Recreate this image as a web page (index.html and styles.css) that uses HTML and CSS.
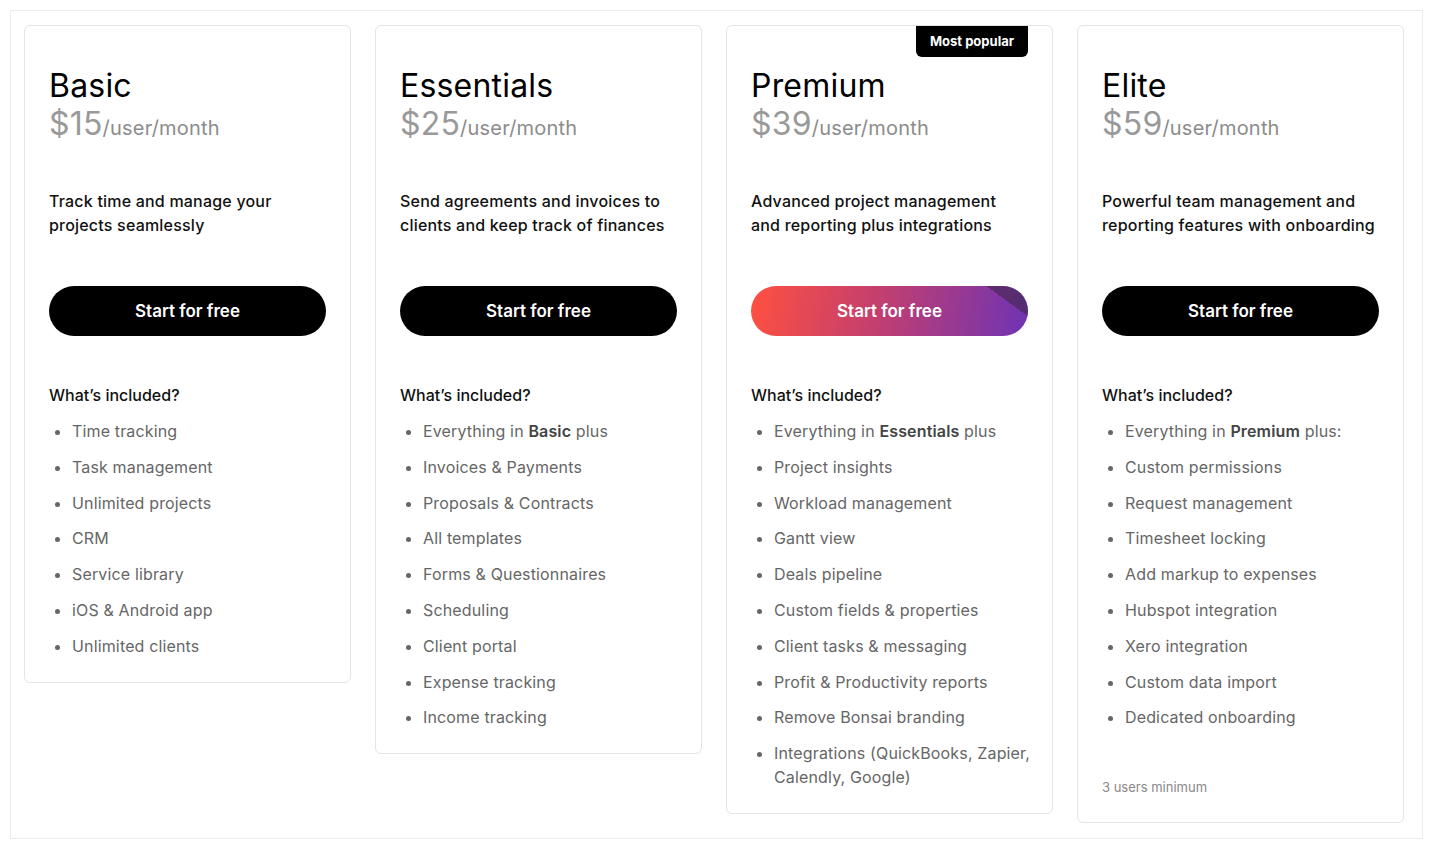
FILE: index.html
```html
<!DOCTYPE html>
<html>
    <head>
        <meta charset="utf-8" />
        <title>Pricing</title>
        <link rel="stylesheet" href="styles.css">
    </head>
    <body>
        <div class="panel">
            <div class="plan">
                <h2 class="plan_name">Basic</h2>
                <div class="plan_price"><span class="amount">$15</span>/user/month</div>
                <p class="plan_desc">Track time and manage your projects seamlessly</p>
                <a class="btn" href="#">Start for free</a>
                <h3 class="inc_title">What’s included?</h3>
                <ul class="features">
                    <li>Time tracking</li>
                    <li>Task management</li>
                    <li>Unlimited projects</li>
                    <li>CRM</li>
                    <li>Service library</li>
                    <li>iOS &amp; Android app</li>
                    <li>Unlimited clients</li>
                </ul>
            </div>
            <div class="plan">
                <h2 class="plan_name">Essentials</h2>
                <div class="plan_price"><span class="amount">$25</span>/user/month</div>
                <p class="plan_desc">Send agreements and invoices to clients and keep track of finances</p>
                <a class="btn" href="#">Start for free</a>
                <h3 class="inc_title">What’s included?</h3>
                <ul class="features">
                    <li>Everything in <b>Basic</b> plus</li>
                    <li>Invoices &amp; Payments</li>
                    <li>Proposals &amp; Contracts</li>
                    <li>All templates</li>
                    <li>Forms &amp; Questionnaires</li>
                    <li>Scheduling</li>
                    <li>Client portal</li>
                    <li>Expense tracking</li>
                    <li>Income tracking</li>
                </ul>
            </div>
            <div class="plan plan_popular">
                <div class="badge">Most popular</div>
                <h2 class="plan_name">Premium</h2>
                <div class="plan_price"><span class="amount">$39</span>/user/month</div>
                <p class="plan_desc">Advanced project management and reporting plus integrations</p>
                <a class="btn btn_grad" href="#">Start for free</a>
                <h3 class="inc_title">What’s included?</h3>
                <ul class="features">
                    <li>Everything in <b>Essentials</b> plus</li>
                    <li>Project insights</li>
                    <li>Workload management</li>
                    <li>Gantt view</li>
                    <li>Deals pipeline</li>
                    <li>Custom fields &amp; properties</li>
                    <li>Client tasks &amp; messaging</li>
                    <li>Profit &amp; Productivity reports</li>
                    <li>Remove Bonsai branding</li>
                    <li>Integrations (QuickBooks, Zapier, Calendly, Google)</li>
                </ul>
            </div>
            <div class="plan">
                <h2 class="plan_name">Elite</h2>
                <div class="plan_price"><span class="amount">$59</span>/user/month</div>
                <p class="plan_desc">Powerful team management and reporting features with onboarding</p>
                <a class="btn" href="#">Start for free</a>
                <h3 class="inc_title">What’s included?</h3>
                <ul class="features">
                    <li>Everything in <b>Premium</b> plus:</li>
                    <li>Custom permissions</li>
                    <li>Request management</li>
                    <li>Timesheet locking</li>
                    <li>Add markup to expenses</li>
                    <li>Hubspot integration</li>
                    <li>Xero integration</li>
                    <li>Custom data import</li>
                    <li>Dedicated onboarding</li>
                </ul>
                <p class="plan_note">3 users minimum</p>
            </div>
        </div>
    </body>
</html>
```

FILE: styles.css
```css
html{
    background:#fff;
}
body{
    margin:10px;
    font-family:Inter,"Noto Sans",sans-serif;
    color:#111;
}
.panel{
    height:829px;
    box-sizing:border-box;
    padding:14px 0 0 13px;
    display:flex;
    align-items:flex-start;
    gap:24px;
    background:#fff;
    border:1px solid #ececec;
    box-shadow:0 0 10px 1px rgba(0,0,0,0.2);
}
.plan{
    position:relative;
    flex:0 0 327px;
    box-sizing:border-box;
    padding:41px 24px 24px 24px;
    border:1px solid #e4e4e4;
    border-radius:6px;
}
.plan_name{
    margin:0;
    font-size:32px;
    font-weight:400;
    line-height:38px;
    color:#000;
    letter-spacing:0.2px;
}
.plan_price{
    font-size:20px;
    color:#8c8c8c;
    line-height:38px;
    letter-spacing:0.2px;
}
.plan_price .amount{
    font-size:32px;
    color:#999;
}
.plan_desc{
    margin:42px 0 0 0;
    font-size:16px;
    font-weight:500;
    line-height:24px;
    color:#111;
    letter-spacing:0.2px;
}
.btn{
    display:block;
    margin-top:49px;
    height:50px;
    line-height:50px;
    border-radius:25px;
    background:#000;
    color:#fff;
    text-align:center;
    font-size:17px;
    font-weight:600;
    text-decoration:none;
}
/*中间那张卡的渐变按钮*/
.btn_grad{
    position:relative;
    overflow:hidden;
    background:linear-gradient(100deg,#ff5040 0%,#c43f6e 45%,#6e33b5 100%);
}
.btn_grad::after{
    content:"";
    position:absolute;
    right:0;
    top:0;
    width:42px;
    height:30px;
    background:linear-gradient(216deg,rgba(70,40,80,0.65) 50%,transparent 50%);
}
.inc_title{
    margin:47px 0 0 0;
    font-size:16px;
    font-weight:500;
    line-height:24px;
    color:#111;
}
.features{
    margin:12px -4px 0 0;
    padding:0 0 0 23px;
    font-size:16px;
    line-height:24px;
    color:#666;
    letter-spacing:0.15px;
}
.features li{
    margin-bottom:11.8px;
}
.features li:last-child{
    margin-bottom:0;
}
.features b{
    color:#444;
    font-weight:600;
}
.plan_note{
    margin:47px 0 0 0;
    font-size:13px;
    line-height:22px;
    color:#888;
}
.badge{
    position:absolute;
    top:0;
    right:24px;
    padding:0 14px;
    height:31px;
    line-height:30px;
    background:#000;
    color:#fff;
    font-size:13px;
    font-weight:700;
    border-radius:0 0 6px 6px;
}
```
